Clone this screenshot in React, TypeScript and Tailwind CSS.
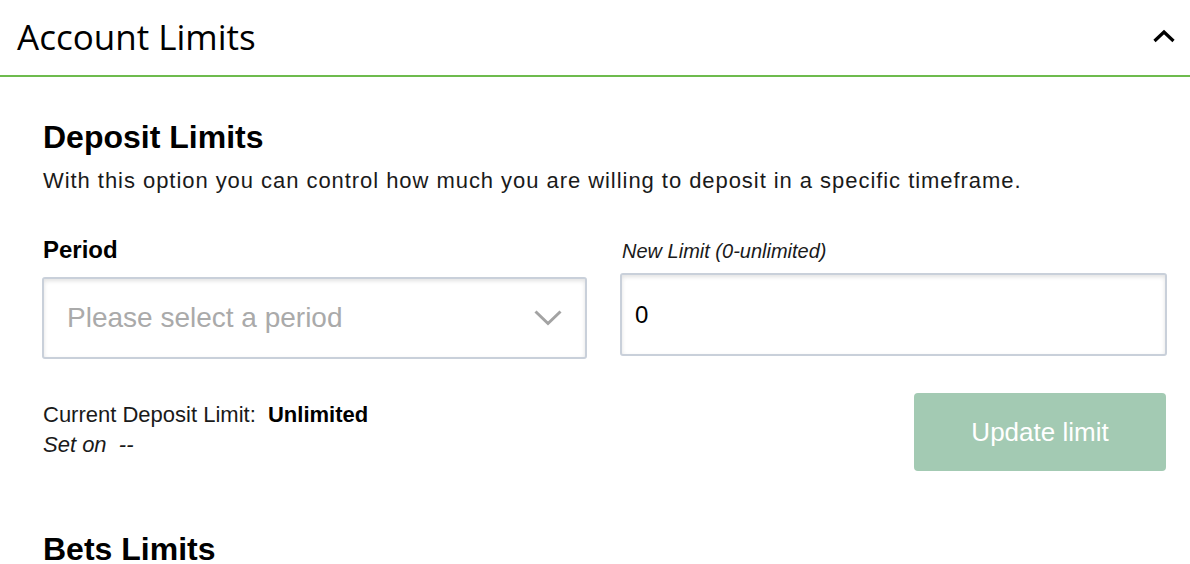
const helv = "font-['Liberation_Sans',Arial,sans-serif]";

const inputBox =
  "rounded-[3px] border-2 border-[#c9d0da] bg-white shadow-[inset_0_2px_4px_rgba(0,0,0,0.12)]";

export default function App() {
	return (
		<div className="w-[1190px] h-[564px] overflow-hidden bg-white text-black">
			{/* Accordion header ---------------------------------------------*/}
			<div className="flex h-[77px] items-center justify-between border-b-2 border-[#6dbb4e] pl-[17px] pr-[15px]">
				<h1 className="font-['Open_Sans',sans-serif] font-medium text-[35px] leading-none pb-[2px]">Account Limits</h1>
				<svg width="22" height="14" viewBox="0 0 22 14" className="-mt-[3px]">
					<polyline points="1.5,12 11,3 20.5,12" fill="none" stroke="#000" strokeWidth="3.2" />
				</svg>
			</div>

			{/* Deposit limits ---------------------------------------------*/}
			<div className={`${helv} pl-[43px] pr-[24px]`}>
				<h2 className="mt-[42px] text-[32px] font-bold leading-[36px]">Deposit Limits</h2>
				<p className="mt-[13px] text-[22px] leading-[26px] tracking-[0.95px] text-[#1a1a1a]">
					With this option you can control how much you are willing to deposit in a specific timeframe.
				</p>

				<div className="mt-[42px] grid grid-cols-[544px_545px] items-start gap-x-[35px]">
					<div className="flex flex-col">
						<label className="text-[24px] font-bold leading-[28px] mb-[13px]">Period</label>
						<div className={`${inputBox} flex h-[82px] items-center justify-between pl-[23px] pr-[23px] -ml-[1px]`}>
							<span className="text-[28px] text-[#aaaaaa]">Please select a period</span>
							<svg width="28" height="16" viewBox="0 0 28 16">
								<polyline points="1.5,1.5 14,13.5 26.5,1.5" fill="none" stroke="#a3a3a3" strokeWidth="3" />
							</svg>
						</div>
					</div>
					<div className="flex flex-col pt-[3px]">
						<label className="italic text-[20px] leading-[24px] mb-[10px] text-[#1a1a1a]">New Limit (0-unlimited)</label>
						<div className={`${inputBox} flex h-[83px] items-center pl-[13px] -ml-[2px]`}>
							<span className="text-[24px]">0</span>
						</div>
					</div>
				</div>

				<div className="mt-[34px] flex items-start justify-between">
					<div className="pt-[7px] text-[22px] leading-[30px] text-[#1a1a1a]">
						<p>
							Current Deposit Limit:&nbsp; <span className="font-bold text-black">Unlimited</span>
						</p>
						<p className="italic">Set on&nbsp; --</p>
					</div>
					<button className="h-[78px] w-[252px] rounded-[4px] bg-[#a3cab3] text-[26px] text-white">
						Update limit
					</button>
				</div>

				<h2 className="mt-[60px] text-[32px] font-bold leading-[36px]">Bets Limits</h2>
			</div>
		</div>
	);
}
